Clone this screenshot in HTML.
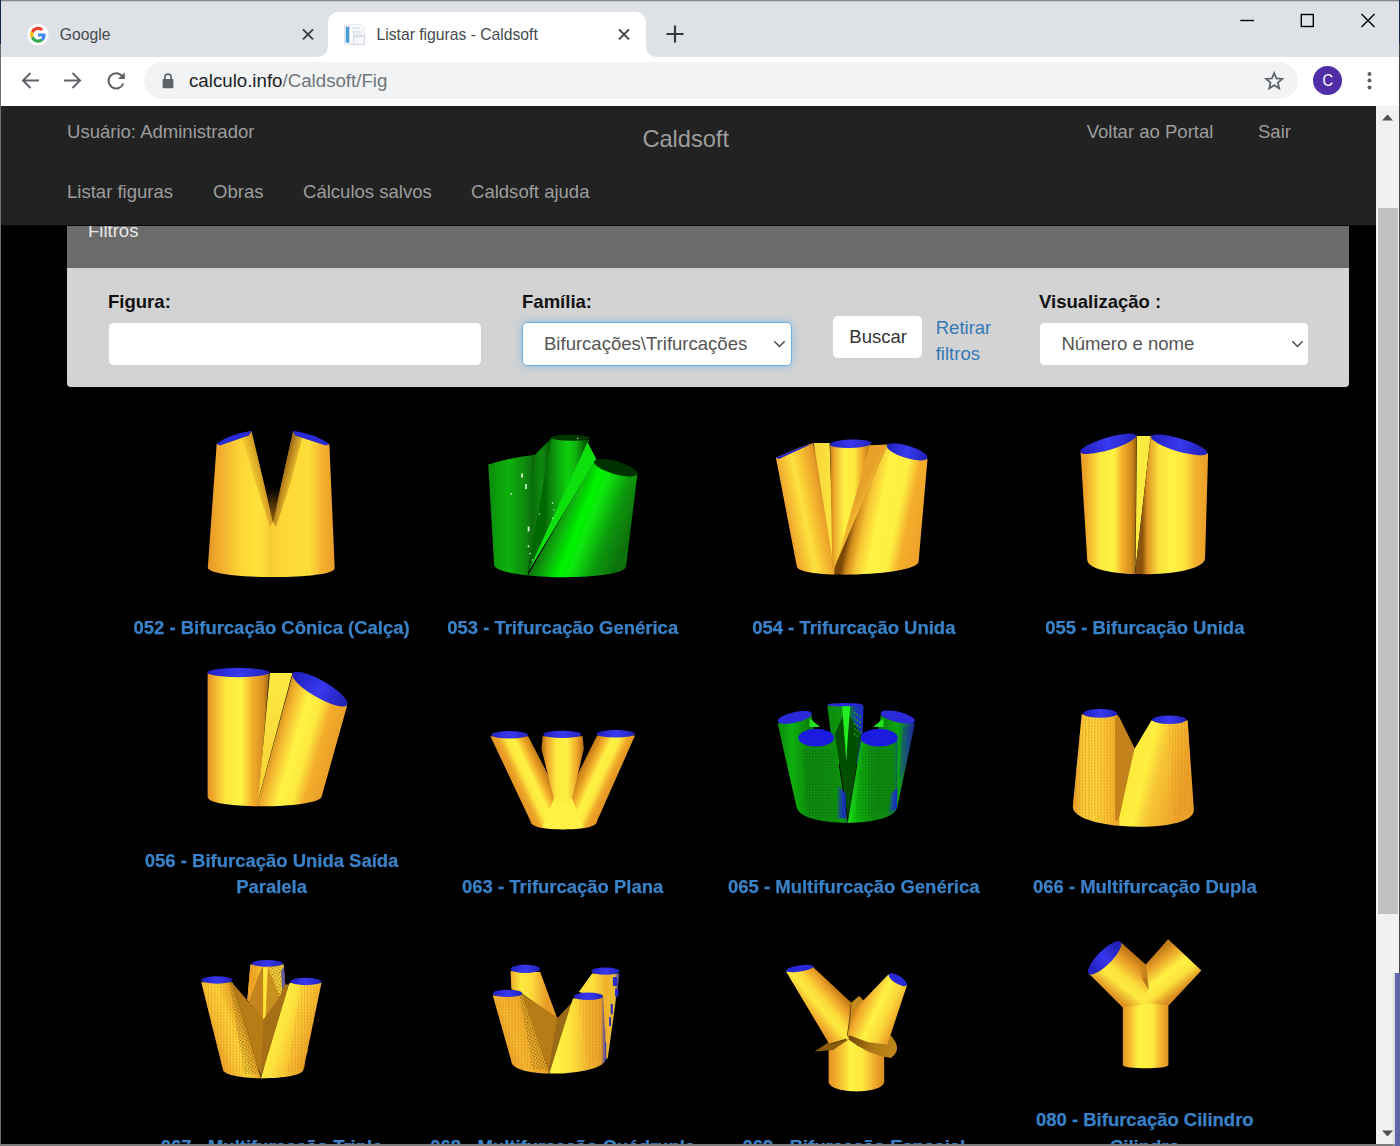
<!DOCTYPE html>
<html><head><meta charset="utf-8"><title>Listar figuras - Caldsoft</title>
<style>
*{box-sizing:border-box;margin:0;padding:0}
html,body{width:1400px;height:1146px;overflow:hidden;background:#000;font-family:"Liberation Sans",sans-serif}
.abs{position:absolute}
#win{position:absolute;left:0;top:0;width:1400px;height:1146px;overflow:hidden;background:#000}
#tabstrip{left:0;top:0;width:1400px;height:57px;background:#dee1e6}
#toolbar{left:0;top:57px;width:1400px;height:49px;background:#fff}
#omni{left:144px;top:62px;width:1154px;height:37px;border-radius:19px;background:#f1f3f4}
.tabtxt{font-size:15.7px;color:#45494d;white-space:pre;line-height:20px}
#page{left:0;top:106px;width:1376px;height:1038px;background:#000;overflow:hidden}
#nav{left:0;top:0;width:1376px;height:119.5px;background:#222;border-bottom:1px solid #080808}
.nl{position:absolute;font-size:18.55px;color:#9d9d9d;white-space:pre;line-height:22px}
.lbl{position:absolute;font-size:18.55px;font-weight:700;color:#111;white-space:pre;line-height:22px}
.cap{position:absolute;font-size:18.48px;font-weight:700;color:#3a82c8;-webkit-text-stroke:0.25px #3a82c8;white-space:pre;line-height:26.4px;text-align:center}
#sb{left:1376px;top:106px;width:23px;height:1038px;background:#f1f1f1}
</style></head><body>
<div id="win">
<!-- CHROME -->
<div id="tabstrip" class="abs"></div>
<div id="toolbar" class="abs"></div>
<div id="omni" class="abs"></div>
<!-- inactive tab -->
<svg class="abs" style="left:27.4px;top:24px" width="22" height="22" viewBox="0 0 22 22">
<circle cx="11" cy="10.7" r="10.6" fill="#fff"/>
<g transform="translate(3.1,2.8) scale(0.33)">
<path fill="#EA4335" d="M24 9.5c3.54 0 6.71 1.22 9.21 3.6l6.85-6.85C35.9 2.38 30.47 0 24 0 14.62 0 6.51 5.38 2.56 13.22l7.98 6.19C12.43 13.72 17.74 9.5 24 9.5z"/>
<path fill="#4285F4" d="M46.98 24.55c0-1.57-.15-3.09-.38-4.55H24v9.02h12.94c-.58 2.96-2.26 5.48-4.78 7.18l7.73 6c4.51-4.18 7.09-10.36 7.09-17.65z"/>
<path fill="#FBBC05" d="M10.53 28.59c-.48-1.45-.76-2.99-.76-4.59s.27-3.14.76-4.59l-7.98-6.19C.92 16.46 0 20.12 0 24c0 3.88.92 7.54 2.56 10.78l7.97-6.19z"/>
<path fill="#34A853" d="M24 48c6.48 0 11.93-2.13 15.89-5.81l-7.73-6c-2.15 1.45-4.92 2.3-8.16 2.3-6.26 0-11.57-4.22-13.47-9.91l-7.98 6.19C6.51 42.62 14.62 48 24 48z"/>
</g></svg>
<div class="abs tabtxt" style="left:59.8px;top:25px">Google</div>
<svg class="abs" style="left:301px;top:27px" width="14" height="14" viewBox="0 0 14 14"><path d="M2 2.4L12 12.4M12 2.4L2 12.4" stroke="#3c4043" stroke-width="2" fill="none"/></svg>
<!-- active tab -->
<svg class="abs" style="left:316px;top:12px" width="342" height="45" viewBox="0 0 342 44" preserveAspectRatio="none">
<path d="M0 44 C8 44 12 40 12 32 L12 11 C12 4 16 0 23 0 L319 0 C326 0 330 4 330 11 L330 32 C330 40 334 44 342 44 Z" fill="#fff"/></svg>
<svg class="abs" style="left:344px;top:24px" width="22" height="22" viewBox="0 0 22 22">
<rect x="0.5" y="1.5" width="16" height="19" fill="#f6f8fb" stroke="#e2e5ea" stroke-width="1"/>
<path d="M5.5 0.5 L16.5 0.5 L20.5 4.5 L20.5 19.5 L5.5 19.5 Z" fill="#fbfcfe" stroke="#e4e7ec" stroke-width="1"/>
<rect x="1.8" y="2.7" width="3.4" height="16" rx="0.6" fill="#4a9ad4"/>
<rect x="8" y="3" width="8" height="2" fill="#e1e5ec"/>
<rect x="8" y="6.5" width="10" height="4" fill="#e6e9f0"/>
<rect x="9.5" y="11.5" width="11" height="9" fill="#f4f6fb" stroke="#d2d5dc" stroke-width="1"/>
<rect x="9.5" y="11.5" width="11" height="2" fill="#dcdfe6"/>
</svg>
<div class="abs tabtxt" style="left:376.5px;top:25px">Listar figuras - Caldsoft</div>
<svg class="abs" style="left:617px;top:27px" width="14" height="14" viewBox="0 0 14 14"><path d="M2 2.4L12 12.4M12 2.4L2 12.4" stroke="#3c4043" stroke-width="2" fill="none"/></svg>
<svg class="abs" style="left:666px;top:25px" width="18" height="18" viewBox="0 0 18 18"><path d="M9 1.3V16.7M1.3 9H16.7" stroke="#35383d" stroke-width="2.2" stroke-linecap="round" fill="none"/></svg>
<!-- window controls -->
<svg class="abs" style="left:1236px;top:10px" width="144" height="22" viewBox="0 0 144 22">
<path d="M4.3 10.5H18" stroke="#000" stroke-width="1.4"/>
<rect x="65.3" y="4.5" width="12" height="12" fill="none" stroke="#000" stroke-width="1.4"/>
<path d="M125.5 4L138.5 17M138.5 4L125.5 17" stroke="#000" stroke-width="1.4"/>
</svg>
<!-- toolbar icons -->
<svg class="abs" style="left:18px;top:68px" width="120" height="26" viewBox="0 0 120 26">
<g stroke="#5f6368" stroke-width="2" fill="none">
<path d="M21 12.5H5.5M12.5 5L5 12.5L12.5 20"/>
<path d="M46 12.5H62M54.5 5L62 12.5L54.5 20"/>
<path d="M104.2 8.2A7.6 7.6 0 1 0 105.3 15.5"/>
</g>
<path d="M106.8 4.2V11H100Z" fill="#5f6368"/>
</svg>
<svg class="abs" style="left:161px;top:72px" width="14" height="18" viewBox="0 0 14 18">
<path d="M3.9 7.5V5.2A3.1 3.1 0 0 1 10.1 5.2V7.5" stroke="#5f6368" stroke-width="1.7" fill="none"/>
<rect x="1.6" y="7" width="10.8" height="9.3" rx="1.2" fill="#5f6368"/></svg>
<div class="abs" style="left:189px;top:69px;font-size:18.7px;line-height:24px;color:#202124;white-space:pre">calculo.info<span style="color:#70757a">/Caldsoft/Fig</span></div>
<svg class="abs" style="left:1263px;top:69px" width="22" height="22" viewBox="0 0 22 22">
<g transform="translate(11.2,11.8) scale(0.88) translate(-11,-11)"><path d="M11 2.2L13.6 8.3L20.2 8.8L15.2 13.1L16.7 19.6L11 16.1L5.3 19.6L6.8 13.1L1.8 8.8L8.4 8.3Z" fill="none" stroke="#5f6368" stroke-width="2" stroke-linejoin="miter"/></g></svg>
<div class="abs" style="left:1312.5px;top:66px;width:29.4px;height:29.4px;border-radius:50%;background:#512da8"></div>
<div class="abs" style="left:1312.5px;top:66px;width:29.4px;height:29.4px;line-height:29.4px;text-align:center;color:#fff;font-size:17px;transform:scaleX(0.86)">C</div>
<svg class="abs" style="left:1365px;top:70px" width="10" height="22" viewBox="0 0 10 22"><g fill="#5f6368"><circle cx="4.5" cy="4" r="2"/><circle cx="4.5" cy="10.6" r="2"/><circle cx="4.5" cy="17.4" r="2"/></g></svg>

<!-- PAGE -->
<div id="page" class="abs">

<div class="abs" style="left:67px;top:109px;width:1282.3px;height:172.3px;background:#d3d3d3;border-radius:4px"></div>
<div class="abs" style="left:67px;top:109px;width:1282.3px;height:53.30000000000001px;background:#6b6b6b"></div>
<div class="nl" style="left:88px;top:113.62px;color:#e8e8e8">Filtros</div>
<div class="lbl" style="left:108.00px;top:184.82px">Figura:</div>
<div class="abs" style="left:108.7px;top:216.8px;width:372.3px;height:42px;background:#fff;border-radius:4.5px"></div>
<div class="lbl" style="left:522.00px;top:184.82px">Família:</div>
<div class="abs" style="left:521.7px;top:215.8px;width:270.3px;height:44px;background:#fff;border-radius:5px;border:1.4px solid #66afe9;box-shadow:0 0 8px rgba(102,175,233,.6)"></div>
<div class="nl" style="left:544.00px;top:227.22px;color:#555">Bifurcações\Trifurcações</div>
<svg class="abs" style="left:772px;top:233px" width="15" height="10" viewBox="0 0 15 10"><path d="M2.3 2.2L7.5 7.4L12.7 2.2" fill="none" stroke="#484848" stroke-width="1.45"/></svg>
<div class="abs" style="left:832.7px;top:209.7px;width:89.5px;height:42.8px;background:#fff;border-radius:5px"></div>
<div class="nl" style="left:849.3px;top:219.62px;color:#333">Buscar</div>
<div class="nl" style="left:935.7px;top:210.92px;color:#337ab7">Retirar</div>
<div class="nl" style="left:935.7px;top:237.02px;color:#337ab7">filtros</div>
<div class="lbl" style="left:1039.00px;top:184.52px">Visualização :</div>
<div class="abs" style="left:1039.7px;top:216.8px;width:268.6px;height:42px;background:#fff;border-radius:4.5px"></div>
<div class="nl" style="left:1061.40px;top:227.12px;color:#555">Número e nome</div>
<svg class="abs" style="left:1289.5px;top:233.3px" width="15" height="10" viewBox="0 0 15 10"><path d="M2.3 2.2L7.5 7.4L12.7 2.2" fill="none" stroke="#484848" stroke-width="1.45"/></svg>

<svg class="abs" style="left:0;top:0" width="1376" height="1040" viewBox="0 106 1376 1040"><defs><filter id="bl" x="-5%" y="-5%" width="110%" height="110%"><feGaussianBlur stdDeviation="0.6"/></filter><pattern id="dz" width="3.1" height="2.9" patternUnits="userSpaceOnUse"><rect width="1.3" height="2.1" fill="#e08c1c" opacity=".55"/></pattern><pattern id="dk" width="2.6" height="2.6" patternUnits="userSpaceOnUse" patternTransform="rotate(30)"><rect width="1.2" height="1.2" fill="#3a2a08" opacity=".6"/></pattern><pattern id="dg" width="2.8" height="2.8" patternUnits="userSpaceOnUse"><rect width="1.1" height="1.1" fill="#044804" opacity=".6"/></pattern><linearGradient id="g1" gradientUnits="userSpaceOnUse" x1="207.8" y1="420.0" x2="334.6" y2="420.0"><stop offset="0" stop-color="#e09424"/><stop offset="0.05" stop-color="#eea42a"/><stop offset="0.16" stop-color="#f6bc32"/><stop offset="0.27" stop-color="#fdd838"/><stop offset="0.4" stop-color="#ffe23a"/><stop offset="0.5" stop-color="#f8cc36"/><stop offset="0.6" stop-color="#fdd838"/><stop offset="0.8" stop-color="#fede3a"/><stop offset="0.9" stop-color="#f4b22e"/><stop offset="1" stop-color="#e89c28"/></linearGradient><linearGradient id="g2" gradientUnits="userSpaceOnUse" x1="244.9" y1="464.5" x2="265.6" y2="459.3"><stop offset="0" stop-color="rgba(200,120,20,0)"/><stop offset="1" stop-color="rgba(150,85,10,0.8)"/></linearGradient><linearGradient id="g3" gradientUnits="userSpaceOnUse" x1="302.7" y1="464.5" x2="281.9" y2="458.9"><stop offset="0" stop-color="rgba(200,120,20,0)"/><stop offset="1" stop-color="rgba(100,55,5,0.95)"/></linearGradient><linearGradient id="g4" gradientUnits="userSpaceOnUse" x1="190.0" y1="487.5" x2="190.0" y2="520.8"><stop offset="0" stop-color="rgba(70,42,4,0)"/><stop offset="0.45" stop-color="rgba(80,50,6,0.85)"/><stop offset="1" stop-color="rgba(150,96,14,1)"/></linearGradient><linearGradient id="g5" gradientUnits="userSpaceOnUse" x1="488.2" y1="420.0" x2="534.9" y2="420.0"><stop offset="0" stop-color="#0a8a0a"/><stop offset="0.15" stop-color="#0c9a0c"/><stop offset="0.45" stop-color="#10b010"/><stop offset="0.8" stop-color="#0a8808"/><stop offset="1" stop-color="#066406"/></linearGradient><linearGradient id="g6" gradientUnits="userSpaceOnUse" x1="533.4" y1="420.0" x2="549.7" y2="420.0"><stop offset="0" stop-color="#077007"/><stop offset="0.5" stop-color="#0a8a0a"/><stop offset="1" stop-color="#056005"/></linearGradient><linearGradient id="g7" gradientUnits="userSpaceOnUse" x1="545.2" y1="420.0" x2="589.7" y2="420.0"><stop offset="0" stop-color="#066806"/><stop offset="0.25" stop-color="#0aa00a"/><stop offset="0.5" stop-color="#10d010"/><stop offset="0.7" stop-color="#0cb00c"/><stop offset="0.85" stop-color="#067006"/><stop offset="1" stop-color="#044a04"/></linearGradient><linearGradient id="g8" gradientUnits="userSpaceOnUse" x1="554.1" y1="503.0" x2="629.8" y2="532.7"><stop offset="0" stop-color="#066806"/><stop offset="0.12" stop-color="#0a900a"/><stop offset="0.38" stop-color="#04f404"/><stop offset="0.5" stop-color="#08e808"/><stop offset="0.75" stop-color="#0a9a0a"/><stop offset="1" stop-color="#077207"/></linearGradient><linearGradient id="g9" gradientUnits="userSpaceOnUse" x1="775.9" y1="464.5" x2="818.9" y2="455.6"><stop offset="0" stop-color="#e8a02a"/><stop offset="0.1" stop-color="#f4b430"/><stop offset="0.4" stop-color="#fde23e"/><stop offset="0.6" stop-color="#f8c232"/><stop offset="0.85" stop-color="#e89e28"/><stop offset="1" stop-color="#b87414"/></linearGradient><linearGradient id="g10" gradientUnits="userSpaceOnUse" x1="813.7" y1="420.0" x2="830.8" y2="420.0"><stop offset="0" stop-color="#f8d038"/><stop offset="1" stop-color="#fce440"/></linearGradient><linearGradient id="g11" gradientUnits="userSpaceOnUse" x1="830.1" y1="420.0" x2="870.8" y2="420.0"><stop offset="0" stop-color="#c07a16"/><stop offset="0.1" stop-color="#f0a82a"/><stop offset="0.35" stop-color="#fff244"/><stop offset="0.6" stop-color="#fce83e"/><stop offset="0.8" stop-color="#f0a62a"/><stop offset="1" stop-color="#b06c12"/></linearGradient><linearGradient id="g12" gradientUnits="userSpaceOnUse" x1="830.1" y1="420.0" x2="872.3" y2="420.0"><stop offset="0" stop-color="#2222c0"/><stop offset="0.5" stop-color="#3838f0"/><stop offset="1" stop-color="#2222b8"/></linearGradient><linearGradient id="g13" gradientUnits="userSpaceOnUse" x1="859.0" y1="494.1" x2="870.8" y2="500.1"><stop offset="0" stop-color="#e8a22a"/><stop offset="1" stop-color="#f8c434"/></linearGradient><linearGradient id="g14" gradientUnits="userSpaceOnUse" x1="853.0" y1="509.0" x2="924.2" y2="523.8"><stop offset="0" stop-color="#7a4606"/><stop offset="0.08" stop-color="#d08a1c"/><stop offset="0.2" stop-color="#f8c434"/><stop offset="0.36" stop-color="#fff244"/><stop offset="0.62" stop-color="#fdee42"/><stop offset="0.78" stop-color="#f4ae2c"/><stop offset="1" stop-color="#eea22a"/></linearGradient><linearGradient id="g15" gradientUnits="userSpaceOnUse" x1="887.1" y1="420.0" x2="927.2" y2="420.0"><stop offset="0" stop-color="#2222c0"/><stop offset="0.5" stop-color="#3838f0"/><stop offset="1" stop-color="#2222b8"/></linearGradient><linearGradient id="g16" gradientUnits="userSpaceOnUse" x1="1080.6" y1="420.0" x2="1136.2" y2="420.0"><stop offset="0" stop-color="#e89c28"/><stop offset="0.1" stop-color="#f0a82a"/><stop offset="0.35" stop-color="#fdea40"/><stop offset="0.6" stop-color="#fff244"/><stop offset="0.75" stop-color="#f4b02c"/><stop offset="0.92" stop-color="#d08a1c"/><stop offset="1" stop-color="#9a600c"/></linearGradient><linearGradient id="g17" gradientUnits="userSpaceOnUse" x1="1080.6" y1="420.0" x2="1136.2" y2="420.0"><stop offset="0" stop-color="#2222c0"/><stop offset="0.5" stop-color="#3838f0"/><stop offset="1" stop-color="#2222b8"/></linearGradient><linearGradient id="g18" gradientUnits="userSpaceOnUse" x1="1142.1" y1="420.0" x2="1208.1" y2="420.0"><stop offset="0" stop-color="#8a5208"/><stop offset="0.08" stop-color="#e09424"/><stop offset="0.25" stop-color="#fce03c"/><stop offset="0.45" stop-color="#fff244"/><stop offset="0.62" stop-color="#fdea40"/><stop offset="0.8" stop-color="#f4b22e"/><stop offset="1" stop-color="#e89c28"/></linearGradient><linearGradient id="g19" gradientUnits="userSpaceOnUse" x1="1151.0" y1="420.0" x2="1207.4" y2="420.0"><stop offset="0" stop-color="#2222c0"/><stop offset="0.5" stop-color="#3838f0"/><stop offset="1" stop-color="#2222b8"/></linearGradient><linearGradient id="g20" gradientUnits="userSpaceOnUse" x1="207.6" y1="655.0" x2="269.1" y2="655.0"><stop offset="0" stop-color="#e09424"/><stop offset="0.08" stop-color="#f0a62a"/><stop offset="0.3" stop-color="#fdea40"/><stop offset="0.55" stop-color="#fff244"/><stop offset="0.72" stop-color="#f4b02c"/><stop offset="0.9" stop-color="#d89020"/><stop offset="1" stop-color="#a0640e"/></linearGradient><linearGradient id="g21" gradientUnits="userSpaceOnUse" x1="207.6" y1="655.0" x2="269.1" y2="655.0"><stop offset="0" stop-color="#2222c0"/><stop offset="0.5" stop-color="#3838f0"/><stop offset="1" stop-color="#2222b8"/></linearGradient><linearGradient id="g22" gradientUnits="userSpaceOnUse" x1="195.0" y1="673.1" x2="195.0" y2="801.1"><stop offset="0" stop-color="#fdea40"/><stop offset="1" stop-color="#f8d038"/></linearGradient><linearGradient id="g23" gradientUnits="userSpaceOnUse" x1="264.7" y1="732.1" x2="337.4" y2="752.9"><stop offset="0" stop-color="#7a4606"/><stop offset="0.1" stop-color="#c8841a"/><stop offset="0.24" stop-color="#f4b630"/><stop offset="0.42" stop-color="#fff244"/><stop offset="0.6" stop-color="#fdea40"/><stop offset="0.75" stop-color="#f4ae2c"/><stop offset="1" stop-color="#e89c28"/></linearGradient><linearGradient id="g24" gradientUnits="userSpaceOnUse" x1="292.9" y1="655.0" x2="347.0" y2="655.0"><stop offset="0" stop-color="#2222c0"/><stop offset="0.5" stop-color="#3838f0"/><stop offset="1" stop-color="#2222b8"/></linearGradient><linearGradient id="g25" gradientUnits="userSpaceOnUse" x1="515.1" y1="789.0" x2="548.1" y2="773.5"><stop offset="0" stop-color="#e09424"/><stop offset="0.18" stop-color="#f0a62a"/><stop offset="0.36" stop-color="#fdea40"/><stop offset="0.56" stop-color="#fff244"/><stop offset="0.74" stop-color="#f4b02c"/><stop offset="0.9" stop-color="#d08a1c"/><stop offset="1" stop-color="#b87414"/></linearGradient><linearGradient id="g26" gradientUnits="userSpaceOnUse" x1="611.5" y1="789.0" x2="577.9" y2="773.3"><stop offset="0" stop-color="#e09424"/><stop offset="0.18" stop-color="#f0a62a"/><stop offset="0.36" stop-color="#fdea40"/><stop offset="0.56" stop-color="#fff244"/><stop offset="0.74" stop-color="#f4b02c"/><stop offset="0.9" stop-color="#d08a1c"/><stop offset="1" stop-color="#b87414"/></linearGradient><linearGradient id="g27" gradientUnits="userSpaceOnUse" x1="542.3" y1="700.0" x2="583.1" y2="700.0"><stop offset="0" stop-color="#b87414"/><stop offset="0.12" stop-color="#f0a62a"/><stop offset="0.35" stop-color="#fdea40"/><stop offset="0.6" stop-color="#fff244"/><stop offset="0.85" stop-color="#f0a62a"/><stop offset="1" stop-color="#b87414"/></linearGradient><linearGradient id="g28" gradientUnits="userSpaceOnUse" x1="480.0" y1="794.9" x2="480.0" y2="806.8"><stop offset="0" stop-color="#fdea40"/><stop offset="1" stop-color="#fff244"/></linearGradient><linearGradient id="g29" gradientUnits="userSpaceOnUse" x1="491.1" y1="700.0" x2="528.2" y2="700.0"><stop offset="0" stop-color="#2222c0"/><stop offset="0.5" stop-color="#3838f0"/><stop offset="1" stop-color="#2222b8"/></linearGradient><linearGradient id="g30" gradientUnits="userSpaceOnUse" x1="543.0" y1="700.0" x2="582.3" y2="700.0"><stop offset="0" stop-color="#2222c0"/><stop offset="0.5" stop-color="#3838f0"/><stop offset="1" stop-color="#2222b8"/></linearGradient><linearGradient id="g31" gradientUnits="userSpaceOnUse" x1="597.1" y1="700.0" x2="635.0" y2="700.0"><stop offset="0" stop-color="#2222c0"/><stop offset="0.5" stop-color="#3838f0"/><stop offset="1" stop-color="#2222b8"/></linearGradient><linearGradient id="g32" gradientUnits="userSpaceOnUse" x1="777.6" y1="690.0" x2="813.9" y2="690.0"><stop offset="0" stop-color="#0a8a0a"/><stop offset="0.4" stop-color="#10b010"/><stop offset="1" stop-color="#077007"/></linearGradient><linearGradient id="g33" gradientUnits="userSpaceOnUse" x1="880.7" y1="690.0" x2="914.8" y2="690.0"><stop offset="0" stop-color="#088008"/><stop offset="0.5" stop-color="#0ca80c"/><stop offset="1" stop-color="#2020a0"/></linearGradient><linearGradient id="g34" gradientUnits="userSpaceOnUse" x1="827.3" y1="690.0" x2="863.6" y2="690.0"><stop offset="0" stop-color="#0a8a0a"/><stop offset="0.42" stop-color="#0c980c"/><stop offset="0.5" stop-color="#20f020"/><stop offset="0.58" stop-color="#0a8a0a"/><stop offset="0.8" stop-color="#1a3ab0"/><stop offset="1" stop-color="#1a2ac0"/></linearGradient><linearGradient id="g35" gradientUnits="userSpaceOnUse" x1="796.9" y1="690.0" x2="848.0" y2="690.0"><stop offset="0" stop-color="#10a810"/><stop offset="0.2" stop-color="#0a8a0a"/><stop offset="0.6" stop-color="#0a8c0a"/><stop offset="0.9" stop-color="#0e980e"/><stop offset="1" stop-color="#107a30"/></linearGradient><linearGradient id="g36" gradientUnits="userSpaceOnUse" x1="848.0" y1="690.0" x2="898.5" y2="690.0"><stop offset="0" stop-color="#18e018"/><stop offset="0.2" stop-color="#10b010"/><stop offset="0.5" stop-color="#0a8a0a"/><stop offset="0.9" stop-color="#0a8a0a"/><stop offset="1" stop-color="#14607a"/></linearGradient><linearGradient id="g37" gradientUnits="userSpaceOnUse" x1="836.2" y1="690.0" x2="846.3" y2="690.0"><stop offset="0" stop-color="#108a20"/><stop offset="0.6" stop-color="#1a3ab0"/><stop offset="1" stop-color="#1428a8"/></linearGradient><linearGradient id="g38" gradientUnits="userSpaceOnUse" x1="887.3" y1="690.0" x2="897.4" y2="690.0"><stop offset="0" stop-color="#0c8c14"/><stop offset="0.7" stop-color="#1a3ab8"/><stop offset="1" stop-color="#1428b0"/></linearGradient><linearGradient id="g39" gradientUnits="userSpaceOnUse" x1="1072.8" y1="690.0" x2="1118.8" y2="690.0"><stop offset="0" stop-color="#e89c28"/><stop offset="0.2" stop-color="#f8c636"/><stop offset="0.45" stop-color="#fdda3a"/><stop offset="0.7" stop-color="#f8c434"/><stop offset="1" stop-color="#f0aa2c"/></linearGradient><linearGradient id="g40" gradientUnits="userSpaceOnUse" x1="1121.7" y1="734.5" x2="1193.6" y2="752.3"><stop offset="0" stop-color="#f4c030"/><stop offset="0.12" stop-color="#ffe83c"/><stop offset="0.42" stop-color="#fff040"/><stop offset="0.6" stop-color="#f8c836"/><stop offset="0.8" stop-color="#f2b22e"/><stop offset="1" stop-color="#eaa02a"/></linearGradient><linearGradient id="g41" gradientUnits="userSpaceOnUse" x1="1083.2" y1="690.0" x2="1117.3" y2="690.0"><stop offset="0" stop-color="#2222c0"/><stop offset="0.5" stop-color="#3838f0"/><stop offset="1" stop-color="#2222b8"/></linearGradient><linearGradient id="g42" gradientUnits="userSpaceOnUse" x1="1152.1" y1="690.0" x2="1186.2" y2="690.0"><stop offset="0" stop-color="#2222c0"/><stop offset="0.5" stop-color="#3838f0"/><stop offset="1" stop-color="#2222b8"/></linearGradient><linearGradient id="g43" gradientUnits="userSpaceOnUse" x1="248.8" y1="940.0" x2="262.1" y2="940.0"><stop offset="0" stop-color="#eea22a"/><stop offset="0.6" stop-color="#f4b02c"/><stop offset="1" stop-color="#ffe63c"/></linearGradient><linearGradient id="g44" gradientUnits="userSpaceOnUse" x1="251.7" y1="940.0" x2="282.9" y2="940.0"><stop offset="0" stop-color="#2222c0"/><stop offset="0.5" stop-color="#3838f0"/><stop offset="1" stop-color="#2222b8"/></linearGradient><linearGradient id="g45" gradientUnits="userSpaceOnUse" x1="207.2" y1="1031.9" x2="248.8" y2="1017.1"><stop offset="0" stop-color="#e89c28"/><stop offset="0.3" stop-color="#f8c434"/><stop offset="0.55" stop-color="#fdd83a"/><stop offset="0.8" stop-color="#e8a828"/><stop offset="1" stop-color="#8a6a10"/></linearGradient><linearGradient id="g46" gradientUnits="userSpaceOnUse" x1="274.0" y1="1017.1" x2="318.5" y2="1031.9"><stop offset="0" stop-color="#fff244"/><stop offset="0.3" stop-color="#fde03c"/><stop offset="0.6" stop-color="#f8c434"/><stop offset="1" stop-color="#e89c28"/></linearGradient><linearGradient id="g47" gradientUnits="userSpaceOnUse" x1="201.3" y1="940.0" x2="232.5" y2="940.0"><stop offset="0" stop-color="#2222c0"/><stop offset="0.5" stop-color="#3838f0"/><stop offset="1" stop-color="#2222b8"/></linearGradient><linearGradient id="g48" gradientUnits="userSpaceOnUse" x1="290.3" y1="940.0" x2="321.4" y2="940.0"><stop offset="0" stop-color="#2222c0"/><stop offset="0.5" stop-color="#3838f0"/><stop offset="1" stop-color="#2222b8"/></linearGradient><linearGradient id="g49" gradientUnits="userSpaceOnUse" x1="510.6" y1="940.0" x2="546.2" y2="940.0"><stop offset="0" stop-color="#f0a82a"/><stop offset="0.3" stop-color="#fdea40"/><stop offset="0.6" stop-color="#fdd83a"/><stop offset="1" stop-color="#e89c28"/></linearGradient><linearGradient id="g50" gradientUnits="userSpaceOnUse" x1="510.6" y1="940.0" x2="540.2" y2="940.0"><stop offset="0" stop-color="#2222c0"/><stop offset="0.5" stop-color="#3838f0"/><stop offset="1" stop-color="#2222b8"/></linearGradient><linearGradient id="g51" gradientUnits="userSpaceOnUse" x1="592.1" y1="940.0" x2="619.6" y2="940.0"><stop offset="0" stop-color="#fde03c"/><stop offset="0.5" stop-color="#f0b02c"/><stop offset="0.8" stop-color="#e8c030"/><stop offset="1" stop-color="#3030b0"/></linearGradient><linearGradient id="g52" gradientUnits="userSpaceOnUse" x1="591.4" y1="940.0" x2="619.6" y2="940.0"><stop offset="0" stop-color="#2222c0"/><stop offset="0.5" stop-color="#3838f0"/><stop offset="1" stop-color="#2222b8"/></linearGradient><linearGradient id="g53" gradientUnits="userSpaceOnUse" x1="498.7" y1="1034.9" x2="540.2" y2="1020.1"><stop offset="0" stop-color="#e89c28"/><stop offset="0.3" stop-color="#f4b830"/><stop offset="0.6" stop-color="#f0b02c"/><stop offset="0.85" stop-color="#d8a024"/><stop offset="1" stop-color="#6a5a20"/></linearGradient><linearGradient id="g54" gradientUnits="userSpaceOnUse" x1="492.8" y1="940.0" x2="522.5" y2="940.0"><stop offset="0" stop-color="#2222c0"/><stop offset="0.5" stop-color="#3838f0"/><stop offset="1" stop-color="#2222b8"/></linearGradient><linearGradient id="g55" gradientUnits="userSpaceOnUse" x1="558.0" y1="940.0" x2="605.5" y2="940.0"><stop offset="0" stop-color="#fff244"/><stop offset="0.3" stop-color="#fde03c"/><stop offset="0.6" stop-color="#f4b830"/><stop offset="0.9" stop-color="#e8a028"/><stop offset="1" stop-color="#4040b0"/></linearGradient><linearGradient id="g56" gradientUnits="userSpaceOnUse" x1="573.6" y1="940.0" x2="603.3" y2="940.0"><stop offset="0" stop-color="#2222c0"/><stop offset="0.5" stop-color="#3838f0"/><stop offset="1" stop-color="#2222b8"/></linearGradient><linearGradient id="g57" gradientUnits="userSpaceOnUse" x1="828.6" y1="940.0" x2="884.2" y2="940.0"><stop offset="0" stop-color="#e09424"/><stop offset="0.15" stop-color="#f4b02c"/><stop offset="0.4" stop-color="#fff244"/><stop offset="0.6" stop-color="#fde83e"/><stop offset="0.85" stop-color="#f0a62a"/><stop offset="1" stop-color="#d88c20"/></linearGradient><linearGradient id="g58" gradientUnits="userSpaceOnUse" x1="853.0" y1="1037.9" x2="894.6" y2="1055.7"><stop offset="0" stop-color="#7a4c08"/><stop offset="0.5" stop-color="#b07a16"/><stop offset="1" stop-color="#c08a1c"/></linearGradient><linearGradient id="g59" gradientUnits="userSpaceOnUse" x1="801.9" y1="1014.1" x2="835.2" y2="986.0"><stop offset="0" stop-color="#d88c20"/><stop offset="0.15" stop-color="#f0a62a"/><stop offset="0.42" stop-color="#fdea40"/><stop offset="0.6" stop-color="#fbd83a"/><stop offset="0.8" stop-color="#f0a62a"/><stop offset="1" stop-color="#c07a16"/></linearGradient><linearGradient id="g60" gradientUnits="userSpaceOnUse" x1="856.7" y1="999.3" x2="901.2" y2="1020.1"><stop offset="0" stop-color="#b87414"/><stop offset="0.15" stop-color="#f0a62a"/><stop offset="0.45" stop-color="#fff244"/><stop offset="0.7" stop-color="#fbd83a"/><stop offset="0.9" stop-color="#f0a62a"/><stop offset="1" stop-color="#e09424"/></linearGradient><linearGradient id="g61" gradientUnits="userSpaceOnUse" x1="1122.8" y1="920.0" x2="1168.4" y2="920.0"><stop offset="0" stop-color="#e09424"/><stop offset="0.12" stop-color="#f4b02c"/><stop offset="0.35" stop-color="#fff244"/><stop offset="0.65" stop-color="#fdea40"/><stop offset="0.85" stop-color="#f4b02c"/><stop offset="1" stop-color="#e09424"/></linearGradient><linearGradient id="g62" gradientUnits="userSpaceOnUse" x1="1133.2" y1="955.6" x2="1105.8" y2="989.7"><stop offset="0" stop-color="#c07a16"/><stop offset="0.2" stop-color="#e89c28"/><stop offset="0.5" stop-color="#fde03c"/><stop offset="0.7" stop-color="#fdea40"/><stop offset="1" stop-color="#e09424"/></linearGradient><linearGradient id="g63" gradientUnits="userSpaceOnUse" x1="1156.9" y1="951.9" x2="1185.1" y2="987.5"><stop offset="0" stop-color="#c07a16"/><stop offset="0.2" stop-color="#e8a028"/><stop offset="0.5" stop-color="#fff244"/><stop offset="0.75" stop-color="#fde03c"/><stop offset="1" stop-color="#d88c20"/></linearGradient><linearGradient id="g64" gradientUnits="userSpaceOnUse" x1="1137.7" y1="968.9" x2="1148.0" y2="976.3"><stop offset="0" stop-color="rgba(200,130,28,0)"/><stop offset="1" stop-color="rgba(176,110,20,0.9)"/></linearGradient><linearGradient id="g65" gradientUnits="userSpaceOnUse" x1="1088.7" y1="920.0" x2="1120.6" y2="920.0"><stop offset="0" stop-color="#2222c0"/><stop offset="0.5" stop-color="#3838f0"/><stop offset="1" stop-color="#2222b8"/></linearGradient></defs><g filter="url(#bl)"><path d="M216.7,443.7 L251.5,431.6 L273.0,521.6 L293.1,431.6 L329.4,444.5 L334.7,568.3 C334.7,580.5 207.8,579.8 207.8,567.5 Z" fill="url(#g1)"/>
<polygon points="251.5,431.6 273.0,521.6 270.1,526.8 255.2,482.3 241.9,437.8" fill="url(#g2)"/>
<polygon points="293.1,431.6 273.0,521.6 276.0,526.8 290.8,482.3 302.7,436.3" fill="url(#g3)"/>
<polygon points="264.9,487.5 280.8,487.5 273.0,522.3" fill="url(#g4)"/>
<path d="M216.4,443.7 Q230.0,433.6 252.0,430.7 L249.0,435.4 L219.7,445.5 Z" fill="#2a2ad8"/>
<path d="M292.6,430.7 Q314.6,433.6 329.7,444.0 L325.7,445.5 L295.0,435.4 Z" fill="#2a2ad8"/>
<path d="M488.2,464.5 Q509.7,457.8 534.9,454.8 L536.3,464.5 L527.7,575.5 C508.5,573.5 494.1,569.8 494.1,564.6 Z" fill="url(#g5)"/>
<polygon points="534.9,454.8 551.2,438.5 545.2,479.3 527.5,572.7" fill="url(#g6)"/>
<polygon points="551.2,438.5 589.7,440.0 527.5,572.7" fill="url(#g7)"/>
<ellipse cx="570.5" cy="437.8" rx="19.6" ry="3.0" transform="rotate(1 570.5 437.8)" fill="#033803"/>
<polygon points="587.5,442.2 596.4,459.3 527.5,572.7" fill="#10e010"/>
<path d="M594.2,460.8 L637.5,473.4 L626.1,566.1 C626.1,576.7 566.8,579.5 527.7,575.5 Z" fill="url(#g8)"/>
<ellipse cx="615.7" cy="467.7" rx="22.5" ry="6.5" transform="rotate(16 615.7 467.7)" fill="#033003"/>
<rect x="521.2" y="473.4" width="1.8" height="4.2" fill="#c8f0c8"/>
<rect x="525.1" y="484.1" width="1.8" height="5.0" fill="#c8f0c8"/>
<rect x="510.5" y="493.0" width="1.5" height="1.5" fill="#c8f0c8"/>
<rect x="527.7" y="526.5" width="1.8" height="5.0" fill="#c8f0c8"/>
<rect x="527.7" y="545.2" width="1.5" height="2.1" fill="#c8f0c8"/>
<rect x="529.2" y="552.9" width="1.5" height="1.2" fill="#c8f0c8"/>
<rect x="531.9" y="559.4" width="1.2" height="1.2" fill="#c8f0c8"/>
<rect x="551.8" y="502.4" width="1.5" height="1.5" fill="#c8f0c8"/>
<rect x="553.3" y="509.3" width="1.2" height="1.2" fill="#c8f0c8"/>
<rect x="538.7" y="513.4" width="1.2" height="1.2" fill="#c8f0c8"/>
<rect x="552.1" y="517.6" width="1.2" height="1.2" fill="#c8f0c8"/>
<rect x="577.0" y="437.8" width="1.2" height="1.2" fill="#c8f0c8"/>
<path d="M775.9,457.8 L799.7,447.4 L813.0,443.0 L834.7,523.8 L834.7,574.6 C813.5,574.1 796.7,571.3 796.7,566.1 Z" fill="url(#g9)"/>
<polygon points="775.9,457.8 799.7,447.4 813.0,443.0 807.1,445.9 778.9,458.9" fill="#2424c8"/>
<polygon points="813.7,443.0 829.6,443.0 834.1,569.8" fill="url(#g10)"/>
<polygon points="830.1,445.2 870.8,444.5 836.0,568.3 832.3,568.3" fill="url(#g11)"/>
<ellipse cx="850.8" cy="443.7" rx="20.8" ry="4.2" transform="rotate(-2 850.8 443.7)" fill="url(#g12)"/>
<polygon points="869.6,445.2 887.4,444.5 835.2,568.3" fill="url(#g13)"/>
<path d="M887.1,445.2 L927.5,459.3 L918.6,561.6 C918.6,570.6 870.4,575.6 834.7,574.6 L834.7,566.8 Z" fill="url(#g14)"/>
<ellipse cx="907.2" cy="451.9" rx="21.2" ry="6.2" transform="rotate(17 907.2 451.9)" fill="url(#g15)"/>
<path d="M1080.6,451.9 L1136.5,435.6 L1135.3,574.1 C1109.9,573.3 1087.2,568.5 1087.2,559.4 Z" fill="url(#g16)"/>
<ellipse cx="1108.3" cy="443.7" rx="29.2" ry="6.2" transform="rotate(-16.5 1108.3 443.7)" fill="url(#g17)"/>
<polygon points="1136.9,436.0 1150.6,436.0 1135.6,568.3" fill="#fdea40"/>
<path d="M1150.7,436.0 L1208.1,453.4 L1205.1,557.9 C1205.1,569.6 1167.9,575.2 1135.3,574.1 L1135.6,568.3 Z" fill="url(#g18)"/>
<ellipse cx="1179.2" cy="444.9" rx="29.4" ry="6.5" transform="rotate(16.5 1179.2 444.9)" fill="url(#g19)"/>
<path d="M207.6,673.5 L269.1,673.5 L258.2,806.3 C232.0,806.1 207.6,803.1 207.6,797.1 Z" fill="url(#g20)"/>
<ellipse cx="238.3" cy="672.5" rx="31.1" ry="4.7" transform="rotate(0 238.3 672.5)" fill="url(#g21)"/>
<polygon points="269.9,673.1 292.4,673.1 258.0,801.1" fill="url(#g22)"/>
<path d="M292.9,673.5 L347.3,705.1 L321.8,795.9 C321.8,802.9 288.7,806.5 258.2,806.3 L258.0,801.1 Z" fill="url(#g23)"/>
<ellipse cx="319.9" cy="689.1" rx="31.6" ry="8.6" transform="rotate(30 319.9 689.1)" fill="url(#g24)"/>
<path d="M490.4,736.3 L528.2,736.3 L563.0,803.8 L563.0,829.3 C546.7,829.3 530.4,827.5 530.4,820.9 Z" fill="url(#g25)"/>
<path d="M635.0,735.6 L597.1,735.6 L563.0,803.8 L563.0,829.3 C580.8,829.3 597.1,827.5 597.1,820.9 Z" fill="url(#g26)"/>
<path d="M542.6,736.3 L582.6,736.3 L583.8,748.9 L571.9,799.4 L563.0,812.7 L554.1,799.4 L541.5,748.9 Z" fill="url(#g27)"/>
<polygon points="554.1,797.9 571.9,797.9 583.8,827.2 563.0,829.6 542.3,827.2" fill="url(#g28)"/>
<ellipse cx="509.7" cy="734.8" rx="18.5" ry="3.7" transform="rotate(0 509.7 734.8)" fill="url(#g29)"/>
<ellipse cx="562.3" cy="734.4" rx="19.0" ry="3.7" transform="rotate(0 562.3 734.4)" fill="url(#g30)"/>
<ellipse cx="615.7" cy="733.8" rx="19.3" ry="3.7" transform="rotate(0 615.7 733.8)" fill="url(#g31)"/>
<path d="M777.6,723.4 L811.7,715.2 L827.3,808.6 L796.9,808.6 Z" fill="url(#g32)"/>
<polygon points="809.5,718.2 820.2,727.1 809.5,727.1" fill="#20e020"/>
<ellipse cx="794.7" cy="717.4" rx="17.5" ry="5.3" transform="rotate(-13 794.7 717.4)" fill="#2a2ad8"/>
<path d="M914.8,723.4 L880.7,715.2 L865.8,808.6 L897.0,808.6 Z" fill="url(#g33)"/>
<polygon points="883.6,718.2 873.2,727.1 883.6,727.1" fill="#20e020"/>
<ellipse cx="897.7" cy="717.0" rx="17.5" ry="5.3" transform="rotate(13 897.7 717.0)" fill="#2a2ad8"/>
<polygon points="827.3,705.6 863.6,705.6 861.4,764.1 834.7,764.1" fill="url(#g34)"/>
<ellipse cx="845.1" cy="704.8" rx="17.8" ry="1.8" transform="rotate(0 845.1 704.8)" fill="#2a2ad8"/>
<polygon points="834.7,734.5 845.8,709.3 861.4,734.5 848.0,817.5" fill="#045004"/>
<polygon points="842.1,706.3 850.3,706.3 848.0,734.5 846.3,761.2 844.3,734.5" fill="#22ee22"/>
<rect x="854.0" y="712.2" width="1.6" height="1.6" fill="#18a818"/>
<rect x="856.6" y="714.0" width="1.6" height="1.6" fill="#18a818"/>
<rect x="859.3" y="715.8" width="1.6" height="1.6" fill="#18a818"/>
<rect x="854.0" y="717.6" width="1.6" height="1.6" fill="#18a818"/>
<rect x="856.6" y="719.4" width="1.6" height="1.6" fill="#18a818"/>
<rect x="859.3" y="721.1" width="1.6" height="1.6" fill="#18a818"/>
<rect x="854.0" y="722.9" width="1.6" height="1.6" fill="#18a818"/>
<rect x="856.6" y="724.7" width="1.6" height="1.6" fill="#18a818"/>
<rect x="859.3" y="726.5" width="1.6" height="1.6" fill="#18a818"/>
<rect x="854.0" y="728.3" width="1.6" height="1.6" fill="#18a818"/>
<rect x="856.6" y="730.0" width="1.6" height="1.6" fill="#18a818"/>
<rect x="859.3" y="731.8" width="1.6" height="1.6" fill="#18a818"/>
<rect x="854.0" y="733.6" width="1.6" height="1.6" fill="#18a818"/>
<rect x="856.6" y="735.4" width="1.6" height="1.6" fill="#18a818"/>
<path d="M798.8,738.9 L834.7,738.9 L847.7,822.7 C822.5,822.8 796.9,817.4 796.9,806.4 Z" fill="url(#g35)"/>
<polygon points="800.6,749.3 834.7,749.3 845.8,817.5 809.5,817.5" fill="url(#dg)"/>
<ellipse cx="816.2" cy="737.7" rx="17.8" ry="8.9" transform="rotate(0 816.2 737.7)" fill="#1a1ae0"/>
<path d="M861.4,738.9 L897.7,738.9 L897.0,806.4 C897.0,817.2 872.5,822.6 847.7,822.7 Z" fill="url(#g36)"/>
<polygon points="862.9,749.3 897.0,749.3 896.2,807.1 854.0,819.0" fill="url(#dg)"/>
<ellipse cx="879.2" cy="737.7" rx="18.5" ry="8.9" transform="rotate(0 879.2 737.7)" fill="#1a1ae0"/>
<polygon points="837.7,784.9 845.8,793.8 846.3,818.3 836.2,818.3" fill="url(#g37)"/>
<polygon points="891.0,793.8 897.4,787.9 897.0,808.6 887.3,814.9" fill="url(#g38)"/>
<polygon points="902.9,727.1 913.7,727.1 904.4,770.1 899.2,779.0" fill="rgba(26,50,176,0.35)"/>
<path d="M1081.7,714.5 L1118.0,715.2 L1120.2,793.8 L1119.1,825.8 C1094.2,823.4 1072.8,816.8 1072.8,806.4 Z" fill="url(#g39)"/>
<path d="M1081.7,714.5 L1118.0,715.2 L1120.2,793.8 L1119.1,825.8 C1094.2,823.4 1072.8,816.8 1072.8,806.4 Z" fill="url(#dz)"/>
<polygon points="1115.1,716.7 1119.1,716.7 1135.1,749.3 1120.2,820.5 1115.1,820.5" fill="#c4821a"/>
<path d="M1151.4,720.4 L1187.7,720.4 L1193.9,810.1 C1193.9,824.4 1153.3,829.1 1119.1,825.8 L1119.1,818.3 L1134.3,749.3 Z" fill="url(#g40)"/>
<polygon points="1167.7,721.9 1187.7,721.1 1192.9,808.6 1173.6,817.5" fill="url(#dz)"/>
<ellipse cx="1100.2" cy="713.4" rx="17.1" ry="4.4" transform="rotate(0 1100.2 713.4)" fill="url(#g41)"/>
<ellipse cx="1169.2" cy="719.7" rx="17.1" ry="4.2" transform="rotate(0 1169.2 719.7)" fill="url(#g42)"/>
<polygon points="250.4,964.5 283.8,964.5 285.4,986.4 280.2,996.8 263.6,1020.1 247.4,999.5" fill="#f0b02c"/>
<polygon points="250.4,964.8 261.5,967.4 249.1,1002.1 247.4,999.5" fill="url(#g43)"/>
<polygon points="250.4,964.8 261.5,967.4 249.1,1002.1 247.4,999.5" fill="url(#dz)"/>
<polygon points="261.5,967.4 248.8,1002.1 263.1,1019.3 263.3,967.7" fill="#c4861e"/>
<polygon points="263.1,967.4 267.9,967.4 265.2,1019.3 263.1,1019.3" fill="#ffe63c"/>
<polygon points="268.0,967.4 280.2,996.8 265.7,1018.1" fill="#c8901f"/>
<polygon points="268.9,967.4 283.5,965.5 284.9,986.4 280.2,996.8" fill="#f6d03a"/>
<polygon points="268.9,967.4 283.5,965.5 284.9,986.4 280.2,996.8" fill="url(#dk)"/>
<polygon points="281.1,971.1 284.1,966.4 285.5,986.4 282.3,991.9" fill="rgba(48,48,200,0.7)"/>
<ellipse cx="267.3" cy="963.4" rx="15.6" ry="3.3" transform="rotate(0 267.3 963.4)" fill="url(#g44)"/>
<polygon points="231.7,982.3 264.3,1020.1 261.4,1076.4 241.3,1029.0" fill="#b87c18"/>
<polygon points="290.6,984.5 284.4,984.5 279.9,996.3 263.3,1019.8 260.6,1076.4 279.9,1029.0" fill="#a87014"/>
<path d="M201.3,982.3 L232.5,982.3 L260.9,1078.2 C241.5,1078.0 222.8,1074.9 222.8,1069.0 Z" fill="url(#g45)"/>
<path d="M201.3,982.3 L232.5,982.3 L260.9,1078.2 C241.5,1078.0 222.8,1074.9 222.8,1069.0 Z" fill="url(#dz)"/>
<polygon points="229.5,983.0 233.9,983.0 260.9,1073.5 244.3,1073.5" fill="url(#dk)"/>
<path d="M321.4,983.0 L289.5,983.0 L260.9,1078.2 C281.9,1078.4 303.6,1075.4 303.6,1069.0 Z" fill="url(#g46)"/>
<polygon points="300.7,983.7 321.1,983.7 304.4,1069.0 287.3,1073.5" fill="url(#dz)"/>
<ellipse cx="216.9" cy="980.0" rx="15.6" ry="3.7" transform="rotate(0 216.9 980.0)" fill="url(#g47)"/>
<ellipse cx="305.9" cy="981.5" rx="15.6" ry="3.7" transform="rotate(0 305.9 981.5)" fill="url(#g48)"/>
<polygon points="510.6,971.1 540.2,971.9 557.3,1018.6 523.9,994.9 511.3,988.9" fill="url(#g49)"/>
<ellipse cx="525.4" cy="968.9" rx="14.8" ry="4.2" transform="rotate(0 525.4 968.9)" fill="url(#g50)"/>
<polygon points="592.1,973.4 619.6,973.4 607.7,1058.6 602.5,1058.6 602.5,997.8 578.8,991.9" fill="url(#g51)"/>
<ellipse cx="605.5" cy="971.1" rx="14.1" ry="3.7" transform="rotate(0 605.5 971.1)" fill="url(#g52)"/>
<rect x="612.9" y="977.1" width="4.4" height="8.9" fill="#2a2ac8"/>
<rect x="615.1" y="988.9" width="3.3" height="7.4" fill="#2a2ac8"/>
<rect x="610.7" y="1003.8" width="2.1" height="10.4" fill="#2a2ac8"/>
<rect x="609.2" y="1017.1" width="1.8" height="8.9" fill="#2a2ac8"/>
<rect x="600.3" y="1042.3" width="5.9" height="16.3" fill="#2a2ac8"/>
<rect x="603.7" y="1029.0" width="1.5" height="8.9" fill="#2a2ac8"/>
<polygon points="521.7,994.1 558.0,1017.8 549.9,1072.0 546.2,1070.5" fill="#b87c18"/>
<polygon points="557.0,1018.6 571.4,1003.0 574.4,1005.2 550.6,1072.0 548.4,1070.5" fill="#9a6a12"/>
<path d="M492.8,995.6 L522.5,994.9 L549.4,1073.5 C529.2,1073.1 511.3,1069.0 511.3,1060.9 Z" fill="url(#g53)"/>
<path d="M492.8,995.6 L522.5,994.9 L549.4,1073.5 C529.2,1073.1 511.3,1069.0 511.3,1060.9 Z" fill="url(#dz)"/>
<polygon points="519.5,996.3 523.2,995.6 549.1,1070.5 532.8,1069.0" fill="url(#dk)"/>
<ellipse cx="507.6" cy="993.4" rx="14.8" ry="3.7" transform="rotate(0 507.6 993.4)" fill="url(#g54)"/>
<path d="M572.9,998.6 L603.3,997.8 L606.2,1057.9 C606.2,1068.5 575.8,1074.1 549.4,1073.5 Z" fill="url(#g55)"/>
<polygon points="578.8,999.3 602.8,998.6 605.5,1057.1 587.7,1067.5" fill="url(#dz)"/>
<ellipse cx="588.4" cy="996.3" rx="14.8" ry="3.7" transform="rotate(0 588.4 996.3)" fill="url(#g56)"/>
<path d="M828.6,1043.8 L847.1,1036.4 L884.2,1043.8 L884.2,1081.6 C884.2,1094.7 828.6,1094.7 828.6,1081.6 Z" fill="url(#g57)"/>
<polygon points="814.5,1051.5 829.3,1041.7 848.6,1039.6 833.0,1050.0" fill="#8a5a0c"/>
<path d="M848.6,1034.9 L888.6,1033.4 Q904.2,1048.2 890.9,1057.9 Q867.9,1054.9 848.6,1039.4 Z" fill="url(#g58)"/>
<polygon points="786.0,971.4 813.0,967.1 851.6,1003.0 849.3,1034.9 844.9,1039.6 829.3,1044.1" fill="url(#g59)"/>
<ellipse cx="799.7" cy="968.5" rx="13.8" ry="3.1" transform="rotate(-8 799.7 968.5)" fill="#2a2ad8"/>
<polygon points="850.1,1003.8 859.0,996.1 866.4,1003.0 853.8,1017.1 848.6,1035.6" fill="#c88a1c"/>
<polygon points="888.3,974.4 907.0,985.2 887.4,1044.5 867.9,1042.3 848.6,1034.9 853.0,1011.2" fill="url(#g60)"/>
<ellipse cx="897.8" cy="979.7" rx="10.4" ry="4.0" transform="rotate(32 897.8 979.7)" fill="#2a2ad8"/>
<polyline points="851.0,1004.1 849.5,1020.1 847.4,1035.6" fill="none" stroke="#7a5208" stroke-width="1.1"/>
<polyline points="829.6,1044.2 846.4,1039.1" fill="none" stroke="#5a3a04" stroke-width="1.0"/>
<path d="M1122.8,997.1 L1168.4,997.1 L1168.4,1065.0 C1168.4,1069.4 1122.8,1069.4 1122.8,1065.0 Z" fill="url(#g61)"/>
<polygon points="1088.7,973.4 1120.6,942.2 1146.6,965.2 1154.0,1003.0 1122.8,1007.5" fill="url(#g62)"/>
<polygon points="1168.1,939.3 1201.4,970.4 1168.8,1005.3 1145.1,1003.0 1148.0,989.7 1145.8,964.5" fill="url(#g63)"/>
<polygon points="1145.8,964.2 1148.9,989.7 1142.1,979.3 1137.7,964.5" fill="url(#g64)"/>
<ellipse cx="1104.7" cy="957.8" rx="22.5" ry="7.1" transform="rotate(-45 1104.7 957.8)" fill="url(#g65)"/></g></svg>
<div class="cap" style="left:111.60px;top:509.15px;width:320px">052 - Bifurcação Cônica (Calça)</div>
<div class="cap" style="left:402.70px;top:509.15px;width:320px">053 - Trifurcação Genérica</div>
<div class="cap" style="left:693.80px;top:509.15px;width:320px">054 - Trifurcação Unida</div>
<div class="cap" style="left:984.85px;top:509.15px;width:320px">055 - Bifurcação Unida</div>
<div class="cap" style="left:111.60px;top:741.80px;width:320px">056 - Bifurcação Unida Saída<br>Paralela</div>
<div class="cap" style="left:402.70px;top:768.40px;width:320px">063 - Trifurcação Plana</div>
<div class="cap" style="left:693.80px;top:768.40px;width:320px">065 - Multifurcação Genérica</div>
<div class="cap" style="left:984.85px;top:768.40px;width:320px">066 - Multifurcação Dupla</div>
<div class="cap" style="left:111.60px;top:1027.70px;width:320px">067 - Multifurcação Tripla</div>
<div class="cap" style="left:402.70px;top:1027.70px;width:320px">068 - Multifurcação Quádrupla</div>
<div class="cap" style="left:693.80px;top:1027.70px;width:320px">069 - Bifurcação Especial</div>
<div class="cap" style="left:984.85px;top:1001.10px;width:320px">080 - Bifurcação Cilindro<br>Cilindro</div>

<div id="nav" class="abs"></div>
<div class="nl" style="left:67px;top:14.62px">Usuário: Administrador</div>
<div class="nl" style="left:1086.7px;top:14.62px">Voltar ao Portal</div>
<div class="nl" style="left:1258px;top:14.62px">Sair</div>
<div class="nl" style="left:67.00px;top:75.12px">Listar figuras</div>
<div class="nl" style="left:213.00px;top:75.12px">Obras</div>
<div class="nl" style="left:303.00px;top:75.12px">Cálculos salvos</div>
<div class="nl" style="left:471.00px;top:75.12px">Caldsoft ajuda</div>
<div class="nl" style="left:642.40px;top:18.82px;font-size:23.6px;line-height:28px">Caldsoft</div>

</div>
<div id="sb" class="abs"></div>
<div class="abs" style="left:1378px;top:207.5px;width:19.5px;height:706.5px;background:#c1c1c1"></div>
<svg class="abs" style="left:1381px;top:113px" width="13" height="9" viewBox="0 0 13 9"><path d="M1 7.5L6.5 1.5L12 7.5Z" fill="#505050"/></svg>
<svg class="abs" style="left:1381px;top:1129px" width="13" height="9" viewBox="0 0 13 9"><path d="M1 1.5L6.5 7.5L12 1.5Z" fill="#505050"/></svg>


<div class="abs" style="left:0;top:0;width:1400px;height:1px;background:#8a8a8c"></div>
<div class="abs" style="left:0;top:1px;width:1400px;height:1px;background:#c4c6ca"></div>
<div class="abs" style="left:0;top:0;width:1.2px;height:44px;background:#16254a"></div>
<div class="abs" style="left:0;top:44px;width:1.2px;height:1102px;background:#6e6e6e"></div>
<div class="abs" style="left:1398.5px;top:0;width:1.5px;height:44px;background:#16254a"></div>
<div class="abs" style="left:1398.5px;top:44px;width:1.5px;height:1102px;background:#444"></div>
<div class="abs" style="left:0;top:1144.4px;width:1400px;height:1.6px;background:#7a7a7a"></div>
<div class="abs" style="left:1392px;top:973px;width:4px;height:173px;background:linear-gradient(90deg,rgba(200,200,200,0),rgba(190,190,200,.7))"></div>
<div class="abs" style="left:1395.2px;top:973px;width:4.8px;height:173px;background:#6264a8"></div>

</div>
</body></html>
